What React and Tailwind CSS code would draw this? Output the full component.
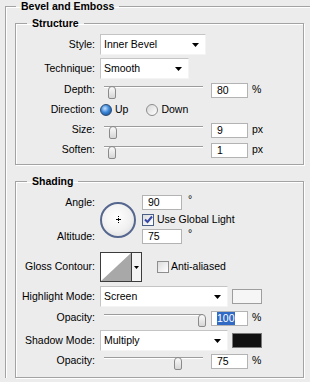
import React from "react";

// small black dropdown arrow used by selects
function Arrow() {
  return (
    <svg width="7" height="4" viewBox="0 0 7 4">
      <polygon points="0,0 7,0 3.5,4" fill="#000" />
    </svg>
  );
}

function Select({ value, className }) {
  return (
    <div
      className={`flex h-[21px] items-center justify-between border border-[#c4c4c4] border-b-[#f4f4f4] border-r-[#f4f4f4] bg-white pl-[3px] pr-[6px] ${className}`}
    >
      <span>{value}</span>
      <Arrow />
    </div>
  );
}

function Field({ value, selected }) {
  return (
    <div className="flex h-[15px] w-[37px] items-center border border-[#b3b3b3] bg-white pl-[5px] leading-[13px]">
      {selected ? <span className="bg-[#316ac5] text-white">{value}</span> : value}
    </div>
  );
}

function Slider({ pos }) {
  return (
    <div className="relative h-[14px] w-[108px]">
      <div className="ml-[4px] mr-[5px] mt-[6px] h-[2px] border-t border-b border-t-[#9c9c9c] border-b-white" />
      <div
        className="absolute top-0 h-[13px] w-[8px] rounded-t-[4px] rounded-b-[2px] border border-[#8a8a8a] bg-gradient-to-b from-[#fbfbfb] to-[#d6d6d6]"
        style={{ left: pos }}
      />
    </div>
  );
}

function Label({ children }) {
  return <div className="w-[79px] shrink-0 text-right">{children}</div>;
}

function SliderRow({ label, pos, value, unit, selected, className = "h-[20px]" }) {
  return (
    <div className={`flex items-center ${className}`}>
      <Label>{label}</Label>
      <div className="ml-[5px]">
        <Slider pos={pos} />
      </div>
      <div className="ml-[3px]">
        <Field value={value} selected={selected} />
      </div>
      <span className="ml-[4px]">{unit}</span>
    </div>
  );
}

function Checkbox({ checked }) {
  return (
    <div
      className={`flex h-[12px] w-[12px] items-center justify-center border bg-gradient-to-br from-[#dcdcdc] to-white ${
        checked ? "border-[#4a5f86]" : "border-[#8e8e8e]"
      }`}
    >
      {checked && (
        <svg width="9" height="9" viewBox="0 0 9 9">
          <path d="M1 4.5 L3.5 7 L8 1.5" stroke="#3647a6" strokeWidth="2" fill="none" />
        </svg>
      )}
    </div>
  );
}

function Radio({ checked }) {
  return checked ? (
    <div className="h-[12px] w-[12px] rounded-full border border-[#2a4a74] bg-[radial-gradient(circle_at_40%_35%,#c6e2ff_0%,#3a86da_45%,#123f78_100%)]" />
  ) : (
    <div className="h-[12px] w-[12px] rounded-full border border-[#8c8c8c] bg-gradient-to-br from-[#d8d8d8] to-white" />
  );
}

function Group({ title, className, children }) {
  return (
    <fieldset
      className={`w-[289px] border border-[#a3a3a3] shadow-[inset_1px_1px_0_#fff,1px_1px_0_#fff] ${className}`}
    >
      <legend className="ml-[11px] px-[5px] font-bold leading-[13px]">{title}</legend>
      {children}
    </fieldset>
  );
}

export default function App() {
  return (
    <div className="h-[382px] w-[310px] overflow-hidden bg-[#ececec] font-['Liberation_Sans',Arial,sans-serif] text-[10.5px] text-black">
      <fieldset className="ml-[5px] w-[340px] border-l border-t border-[#a3a3a3] shadow-[inset_1px_1px_0_#fff]">
        <legend className="ml-[10px] px-[5px] font-bold leading-[13px]">Bevel and Emboss</legend>
        <div className="pl-[9px] pt-[4px]">
          <Group title="Structure" className="pb-[4px]">
            <div className="pt-[4px]">
              <div className="flex items-center">
                <Label>Style:</Label>
                <Select value="Inner Bevel" className="ml-[5px] w-[106px]" />
              </div>
              <div className="mt-[3px] flex items-center">
                <Label>Technique:</Label>
                <Select value="Smooth" className="ml-[5px] w-[89px]" />
              </div>
              <SliderRow label="Depth:" pos={8} value="80" unit="%" className="mt-[1px] h-[20px]" />
              <div className="flex h-[20px] items-center">
                <Label>Direction:</Label>
                <div className="ml-[5px] flex items-center">
                  <Radio checked />
                  <span className="ml-[3px]">Up</span>
                  <div className="ml-[18px]">
                    <Radio />
                  </div>
                  <span className="ml-[3px]">Down</span>
                </div>
              </div>
              <SliderRow label="Size:" pos={9} value="9" unit="px" />
              <SliderRow label="Soften:" pos={8} value="1" unit="px" />
            </div>
          </Group>

          <Group title="Shading" className="mt-[10px] pb-[6px]">
            <div className="pt-[6px]">
              <div className="grid grid-cols-[79px_36px_1fr] grid-rows-[17px_17px_17px] gap-x-[5px]">
                <div className="col-start-1 row-start-1 self-center text-right">Angle:</div>
                <div className="col-start-1 row-start-3 self-center text-right">Altitude:</div>
                <div className="col-start-2 row-span-3 row-start-1 flex h-[36px] w-[36px] items-center justify-center self-center rounded-full border-2 border-[#56678f] bg-[radial-gradient(circle_at_45%_40%,#ffffff_0%,#f1f1f1_55%,#d6d6d6_100%)]">
                  <svg width="5" height="7" viewBox="0 0 5 7">
                    <path d="M0 3.5 H5 M2.5 2 V5 M2.5 6 V7 M2.5 0 V1" stroke="#000" strokeWidth="1" />
                  </svg>
                </div>
                <div className="col-start-3 row-start-1 ml-[1px] flex items-center">
                  <div className="flex h-[15px] w-[40px] items-center border border-[#b3b3b3] bg-white pl-[5px]">90</div>
                  <span className="ml-[6px] self-start leading-[10px]">°</span>
                </div>
                <div className="col-start-3 row-start-2 ml-[1px] flex items-center">
                  <Checkbox checked />
                  <span className="ml-[3px]">Use Global Light</span>
                </div>
                <div className="col-start-3 row-start-3 ml-[1px] flex items-center">
                  <div className="flex h-[15px] w-[40px] items-center border border-[#b3b3b3] bg-white pl-[5px]">75</div>
                  <span className="ml-[6px] self-start leading-[10px]">°</span>
                </div>
              </div>

              <div className="mt-[7px] flex items-center">
                <Label>Gloss Contour:</Label>
                <div className="ml-[5px] flex h-[30px] w-[42px] border border-[#3c3c3c] bg-white">
                  <svg width="30" height="28" viewBox="0 0 30 28" className="block">
                    <polygon points="0,28 30,0 30,28" fill="#a8a8a8" />
                  </svg>
                  <div className="flex flex-1 items-center justify-center border-l border-[#3c3c3c] bg-[#f4f4f4]">
                    <svg width="5" height="3" viewBox="0 0 5 3">
                      <polygon points="0,0 5,0 2.5,3" fill="#000" />
                    </svg>
                  </div>
                </div>
                <div className="ml-[15px]">
                  <Checkbox />
                </div>
                <span className="ml-[2px]">Anti-aliased</span>
              </div>

              <div className="mt-[4px] flex items-center">
                <Label>Highlight Mode:</Label>
                <Select value="Screen" className="ml-[5px] w-[128px]" />
                <div className="ml-[4px] h-[15px] w-[30px] border border-[#9e9e9e] bg-[#f6f6f6]" />
              </div>
              <SliderRow label="Opacity:" pos={98} value="100" unit="%" selected className="h-[22px]" />
              <div className="mt-[1px] flex items-center">
                <Label>Shadow Mode:</Label>
                <Select value="Multiply" className="ml-[5px] w-[128px]" />
                <div className="ml-[4px] h-[15px] w-[30px] border border-[#7a7a7a] bg-[#111111]" />
              </div>
              <SliderRow label="Opacity:" pos={74} value="75" unit="%" />
            </div>
          </Group>
        </div>
      </fieldset>
    </div>
  );
}
